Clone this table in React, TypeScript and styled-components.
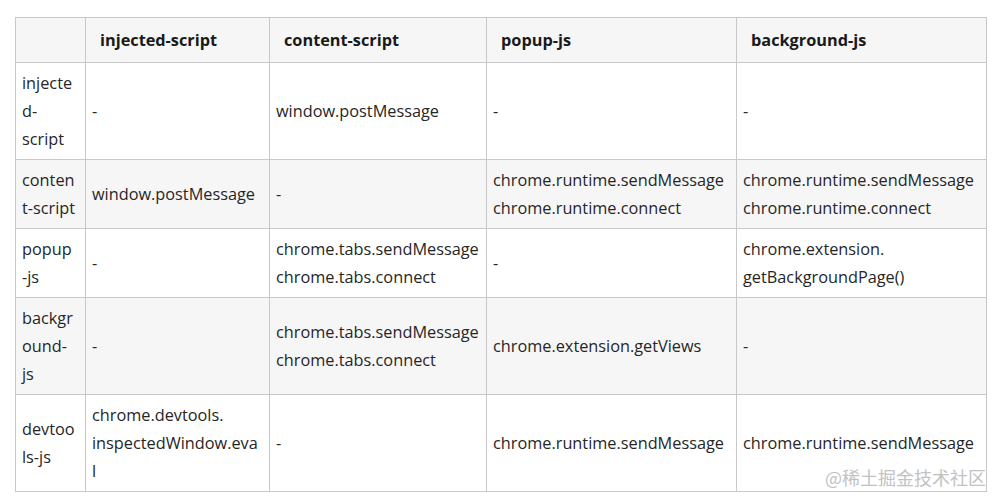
import React from "react";
import styled, { createGlobalStyle } from "styled-components";

const GlobalStyle = createGlobalStyle`
  html, body {
    margin: 0;
    padding: 0;
    background: #ffffff;
  }
  body {
    font-family: "Open Sans", "Noto Sans CJK SC", sans-serif;
    color: #333333;
  }
`;

const Page = styled.div`
  position: relative;
  width: 1002px;
  height: 504px;
  padding: 17px 0 0 15px;
  box-sizing: border-box;
  overflow: hidden;
`;

const Table = styled.table`
  border-collapse: collapse;
  table-layout: fixed;
  width: 972px;
  font-size: 16.3px;
  line-height: 28px;
`;

const HeadCell = styled.th`
  border: 1px solid #c8c8c8;
  background: #f6f6f6;
  padding: 8px 14px;
  text-align: left;
  font-weight: 700;
  color: #1a1a1a;
`;

const Row = styled.tr<{ $shaded?: boolean }>`
  background: ${(p) => (p.$shaded ? "#f6f6f6" : "#ffffff")};
`;

const Cell = styled.td`
  border: 1px solid #c8c8c8;
  padding: 6px 6px;
  vertical-align: middle;
  overflow-wrap: anywhere;
  color: #262626;
`;

const Watermark = styled.div`
  position: absolute;
  right: 16px;
  bottom: 15px;
  font-family: "Noto Sans CJK SC", sans-serif;
  font-size: 18px;
  line-height: 24px;
  color: #c2c2c2;
  pointer-events: none;
`;

type RowData = { head: React.ReactNode; key: string; cells: React.ReactNode[] };

const rows: RowData[] = [
  {
    key: "injected",
    head: <>injecte<br />d-<br />script</>,
    cells: ["-", "window.postMessage", "-", "-"],
  },
  {
    key: "content",
    head: <>conten<br />t-script</>,
    cells: [
      "window.postMessage",
      "-",
      <>chrome.runtime.sendMessage<br />chrome.runtime.connect</>,
      <>chrome.runtime.sendMessage<br />chrome.runtime.connect</>,
    ],
  },
  {
    key: "popup",
    head: <>popup<br />-js</>,
    cells: [
      "-",
      <>chrome.tabs.sendMessage<br />chrome.tabs.connect</>,
      "-",
      <>chrome.extension.<br />getBackgroundPage()</>,
    ],
  },
  {
    key: "background",
    head: <>backgr<br />ound-<br />js</>,
    cells: [
      "-",
      <>chrome.tabs.sendMessage<br />chrome.tabs.connect</>,
      "chrome.extension.getViews",
      "-",
    ],
  },
  {
    key: "devtools",
    head: <>devtoo<br />ls-js</>,
    cells: [
      <>chrome.devtools.<br />inspectedWindow.eva<br />l</>,
      "-",
      "chrome.runtime.sendMessage",
      "chrome.runtime.sendMessage",
    ],
  },
];

export default function App() {
  return (
    <Page>
      <GlobalStyle />
      <Table>
        <colgroup>
          <col style={{ width: 70 }} />
          <col style={{ width: 184 }} />
          <col style={{ width: 217 }} />
          <col style={{ width: 250 }} />
          <col style={{ width: 250 }} />
        </colgroup>
        <thead>
          <tr>
            <HeadCell />
            <HeadCell>injected-script</HeadCell>
            <HeadCell>content-script</HeadCell>
            <HeadCell>popup-js</HeadCell>
            <HeadCell>background-js</HeadCell>
          </tr>
        </thead>
        <tbody>
          {rows.map((r, i) => (
            <Row key={r.key} $shaded={i % 2 === 1}>
              <Cell>{r.head}</Cell>
              {r.cells.map((c, j) => (
                <Cell key={j}>{c}</Cell>
              ))}
            </Row>
          ))}
        </tbody>
      </Table>
      <Watermark>@稀土掘金技术社区</Watermark>
    </Page>
  );
}
